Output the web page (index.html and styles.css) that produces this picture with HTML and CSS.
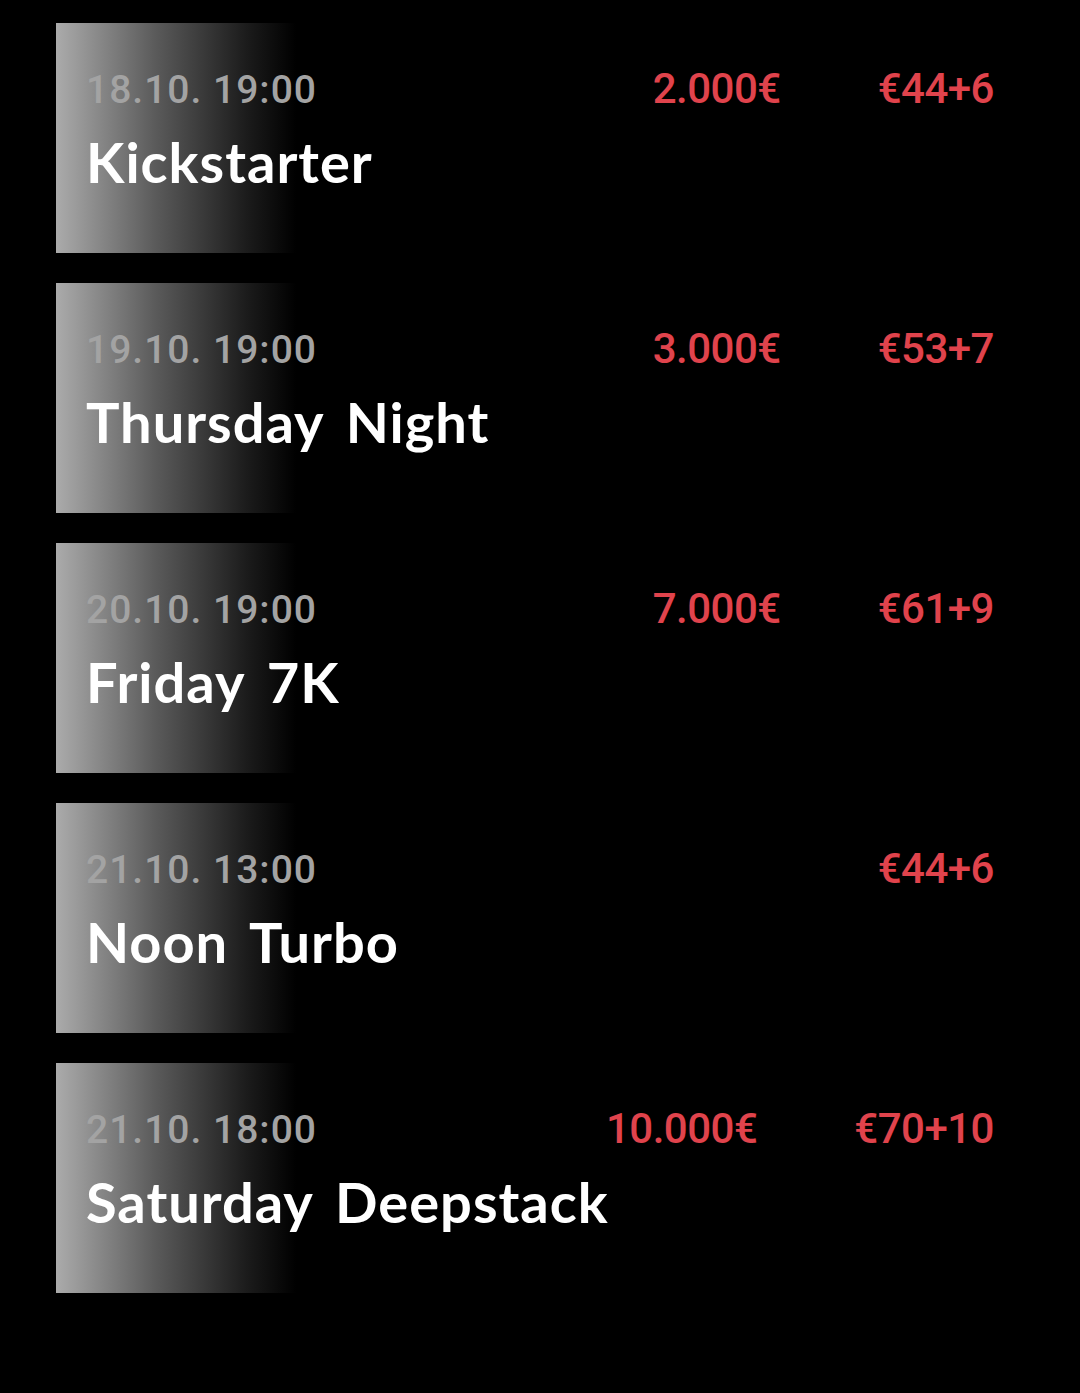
FILE: index.html
```html
<!DOCTYPE html>
<html lang="de">
<head>
<meta charset="utf-8">
<title>Turniere</title>
<link rel="stylesheet" href="styles.css">
</head>
<body>
<main class="list">
  <section class="card">
    <div class="info">
      <div class="date">18.10. 19:00</div>
      <div class="name">Kickstarter</div>
    </div>
    <div class="prices">
      <span class="gtd">2.000€</span>
      <span class="buyin">€44+6</span>
    </div>
  </section>
  <section class="card">
    <div class="info">
      <div class="date">19.10. 19:00</div>
      <div class="name">Thursday Night</div>
    </div>
    <div class="prices">
      <span class="gtd">3.000€</span>
      <span class="buyin">€53+7</span>
    </div>
  </section>
  <section class="card">
    <div class="info">
      <div class="date">20.10. 19:00</div>
      <div class="name">Friday 7K</div>
    </div>
    <div class="prices">
      <span class="gtd">7.000€</span>
      <span class="buyin">€61+9</span>
    </div>
  </section>
  <section class="card">
    <div class="info">
      <div class="date">21.10. 13:00</div>
      <div class="name">Noon Turbo</div>
    </div>
    <div class="prices">
      <span class="buyin">€44+6</span>
    </div>
  </section>
  <section class="card">
    <div class="info">
      <div class="date">21.10. 18:00</div>
      <div class="name">Saturday Deepstack</div>
    </div>
    <div class="prices">
      <span class="gtd">10.000€</span>
      <span class="buyin">€70+10</span>
    </div>
  </section>
</main>
</body>
</html>
```
FILE: styles.css
```css
html, body {
  margin: 0;
  padding: 0;
  background: #000;
}
body {
  width: 1080px;
  height: 1393px;
  overflow: hidden;
}
.list {
  display: flex;
  flex-direction: column;
  gap: 30px;
  padding: 23px 56px 0 56px;
}
.card {
  height: 230px;
  box-sizing: border-box;
  padding: 44px 30px 0 30px;
  display: flex;
  justify-content: space-between;
  align-items: baseline;
  background: linear-gradient(to right, #ababab 0px, #5a5a5a 100px, #1c1c1c 190px, #000 240px);
}
.info {
  display: flex;
  flex-direction: column;
  flex: 1 1 auto;
  min-width: 0;
  white-space: nowrap;
}
.date {
  font-family: Roboto, "Liberation Sans", sans-serif;
  font-weight: 500;
  font-size: 39px;
  line-height: 44px;
  letter-spacing: 1px;
  color: #a3a3a3;
}
.name {
  margin-top: 20px;
  font-family: Lato, "Open Sans", sans-serif;
  font-weight: 700;
  font-size: 56px;
  line-height: 60px;
  letter-spacing: 1px;
  word-spacing: 8px;
  color: #fff;
}
.prices {
  display: flex;
  flex-shrink: 0;
  white-space: nowrap;
  gap: 97px;
  font-family: Roboto, "Liberation Sans", sans-serif;
  font-weight: 500;
  font-size: 42px;
  line-height: 44px;
  letter-spacing: -0.5px;
  color: #e0434c;
}
```
